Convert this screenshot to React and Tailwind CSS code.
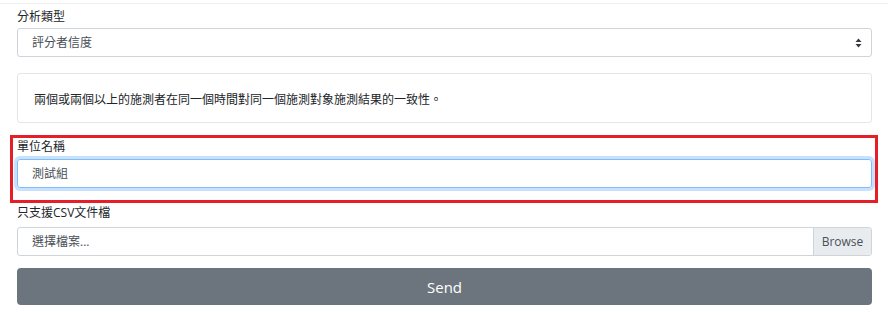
import React from "react";

const font = { fontFamily: '"Open Sans", "Noto Sans CJK TC", sans-serif' };

export default function App() {
  return (
    <div className="w-[895px] h-[336px] bg-white text-[12px] leading-[18px] text-[#212529] font-['Open_Sans','Noto_Sans_CJK_TC',sans-serif]" style={font}>
      <div className="pt-[3px]">
        <div className="h-[1px] w-[888px] bg-[#f0f0f0]" />
      </div>
      <div className="pl-[17px] w-[872px] flex flex-col">
        <label className="block mt-[4px] mb-[2px]">分析類型</label>
        <div className="h-[29px] border border-[#ced4da] rounded-[3px] flex items-center justify-between pl-[14px] pr-[9px] text-[#495057]">
          <span>評分者信度</span>
          <svg width="7" height="10" viewBox="0 0 7 10">
            <path d="M3.5 0.5 L6.5 4 L0.5 4 Z" fill="#343a40" />
            <path d="M3.5 9.5 L6.5 6 L0.5 6 Z" fill="#343a40" />
          </svg>
        </div>
        <div className="mt-[16px] h-[50px] border border-[rgba(0,0,0,0.1)] rounded-[3px] pl-[16px] pt-[17px]">
          兩個或兩個以上的施測者在同一個時間對同一個施測對象施測結果的一致性。
        </div>
        <div className="mt-[12px] ml-[-7px] mr-[-6px] border-[3px] border-[#e61e27] pl-[4px] pr-[3px] pb-[12px]">
          <label className="block">單位名稱</label>
          <div className="mt-[3px] h-[29px] border border-[#80bdff] rounded-[3px] shadow-[0_0_0_3px_rgba(0,123,255,0.22)] flex items-center pl-[14px] text-[#495057]">
            測試組
          </div>
        </div>
        <label className="block mt-[1px] mb-[5px]">只支援CSV文件檔</label>
        <div className="h-[29px] border border-[#ced4da] rounded-[3px] flex items-stretch text-[#495057] overflow-hidden">
          <div className="flex-1 flex items-center pl-[14px]">選擇檔案...</div>
          <div className="w-[58px] bg-[#e9ecef] border-l border-[#ced4da] flex items-center justify-center">
            Browse
          </div>
        </div>
        <button className="mt-[12px] h-[37px] bg-[#6c757d] rounded-[4px] text-white text-[15px] flex items-center justify-center">
          Send
        </button>
      </div>
    </div>
  );
}
